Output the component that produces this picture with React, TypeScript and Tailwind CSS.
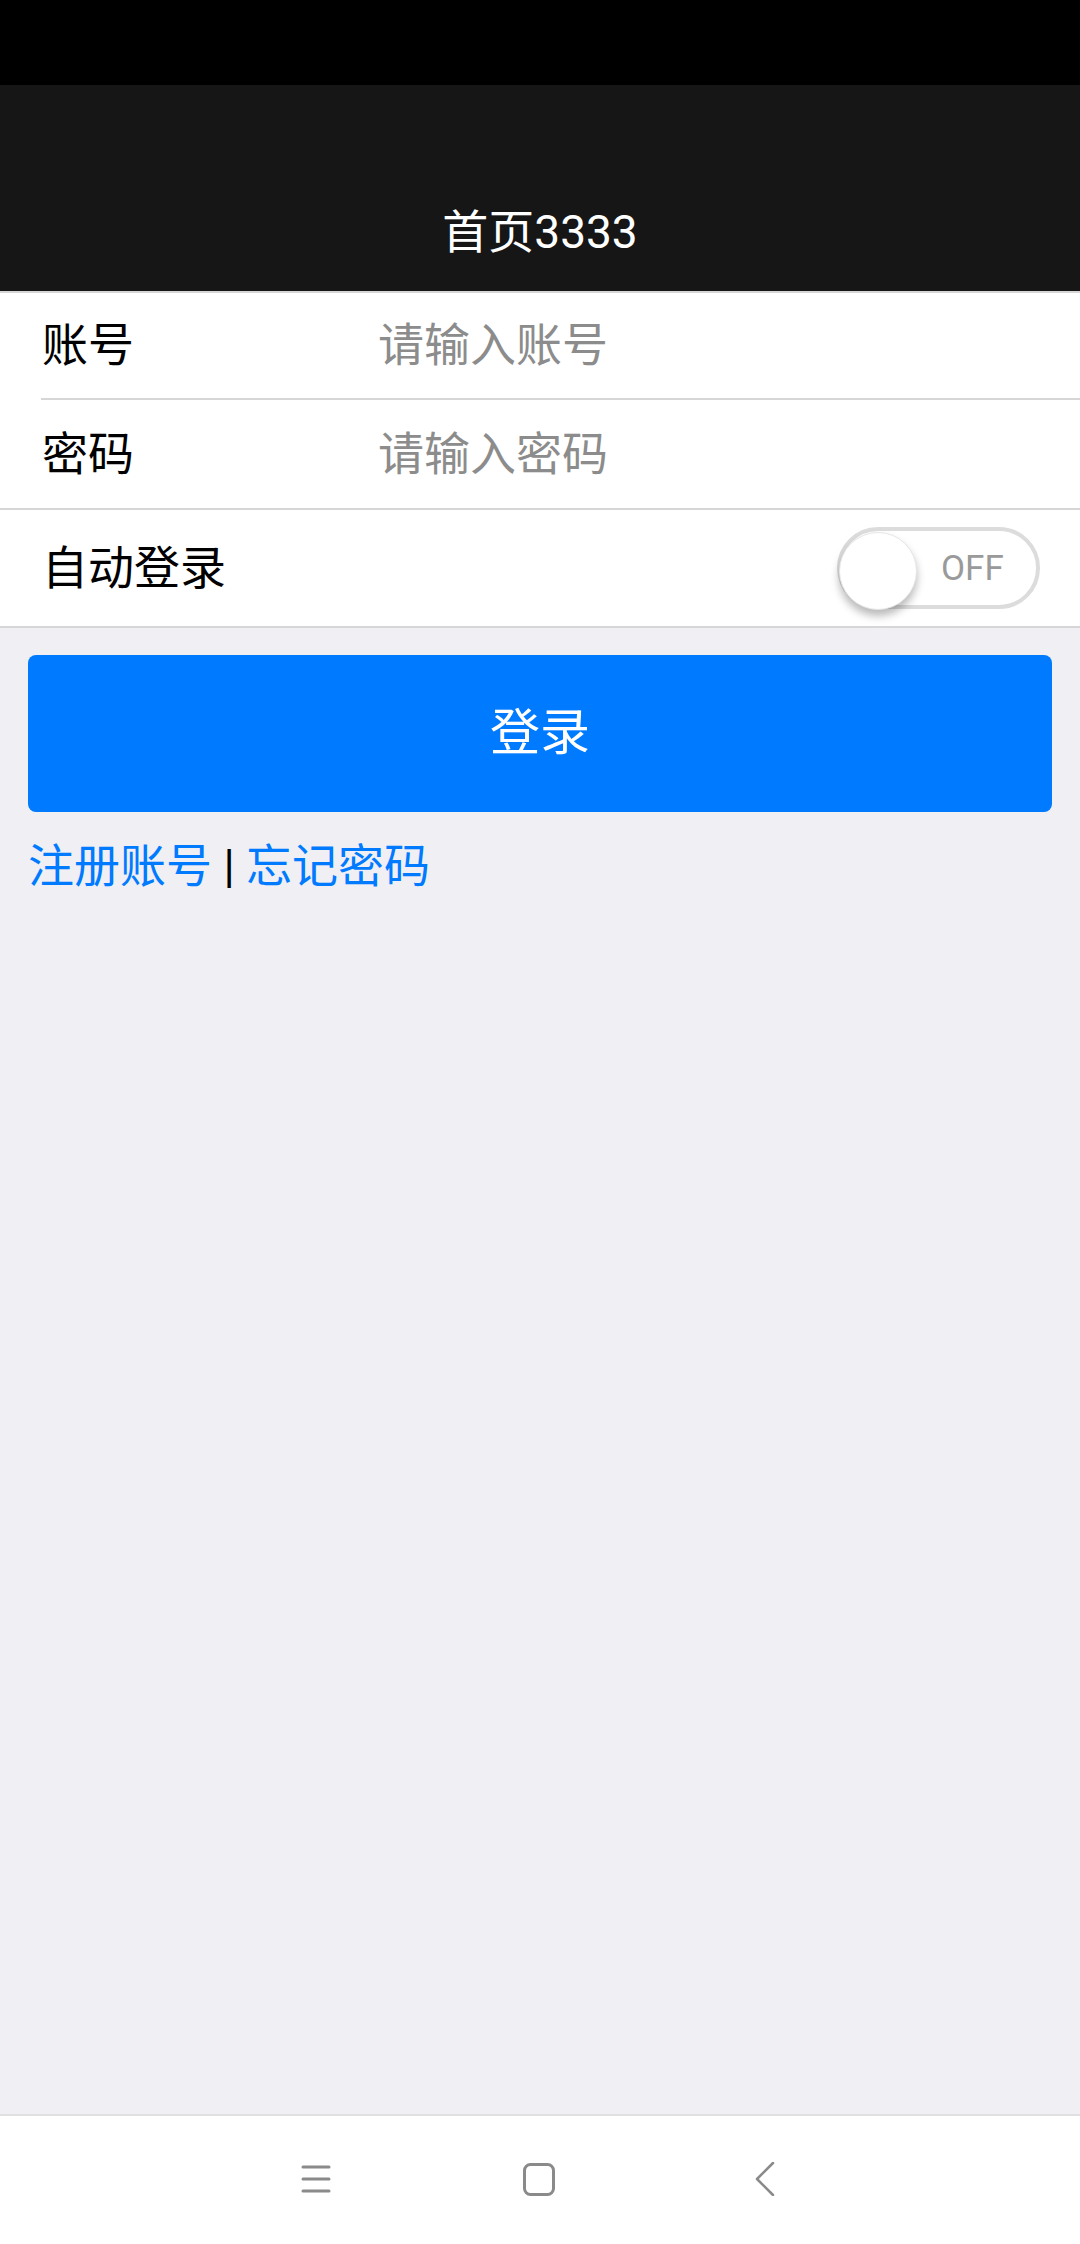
import { useState } from "react";

const font = "font-['Roboto','Noto_Sans_CJK_SC',sans-serif]";

function Toggle() {
  const [on, setOn] = useState(false);
  return (
    <button
      onClick={() => setOn(!on)}
      className="relative w-[203px] h-[82px] rounded-full border-[4px] border-[#dcdcdc] bg-white flex items-center"
    >
      <span className="absolute left-[-2px] top-[1px] w-[78px] h-[78px] rounded-full bg-white shadow-[0_6px_8px_rgba(0,0,0,0.28)] border border-[#e6e6e6]" />
      <span className="ml-[100px] text-[35px] text-[#9a9a9a] leading-none">{on ? "ON" : "OFF"}</span>
    </button>
  );
}

export default function App() {
  return (
    <div className={`h-[2244px] flex flex-col bg-[#efeff4] ${font}`}>
      {/* status bar */}
      <div className="h-[85px] bg-black" />

      {/* header */}
      <div className="bg-[#161616] pt-[88px]">
        <div className="h-[118px] flex items-center justify-center text-white text-[46px]">首页3333</div>
      </div>

      {/* form */}
      <div className="bg-white border-t-2 border-b-2 border-[#d6d6d6]">
        <div className="flex items-center h-[105px] pl-[42px]">
          <span className="w-[336px] text-[46px] text-black">账号</span>
          <input
            placeholder="请输入账号"
            className="flex-1 text-[46px] bg-transparent outline-none placeholder:text-[#8c8c8c]"
          />
        </div>
        <div className="ml-[41px] h-[2px] bg-[#d6d6d6]" />
        <div className="h-[108px] flex items-center pl-[42px]">
          <span className="w-[336px] text-[46px] text-black">密码</span>
          <input
            type="password"
            placeholder="请输入密码"
            className="flex-1 text-[46px] bg-transparent outline-none placeholder:text-[#8c8c8c]"
          />
        </div>
        <div className="h-[2px] bg-[#d6d6d6]" />
        <div className="h-[116px] flex items-center justify-between pl-[42px] pr-[40px]">
          <span className="text-[46px] text-black">自动登录</span>
          <Toggle />
        </div>
      </div>

      {/* actions */}
      <div className="flex-1 px-[28px]">
        <button className="mt-[27px] w-full h-[157px] rounded-[8px] bg-[#007aff] text-white text-[50px]">登录</button>
        <div className="mt-[27px] text-[46px] leading-[1.2]">
          <span className="text-[#007aff]">注册账号</span>
          <span className="text-black"> | </span>
          <span className="text-[#007aff]">忘记密码</span>
        </div>
      </div>

      {/* nav bar */}
      <div className="h-[130px] bg-white border-t-2 border-[#e0e0e0] flex items-center justify-center gap-[192px] pb-[2px] pr-[4px]">
        <svg width="30" height="28" viewBox="0 0 30 28" className="text-[#8a8a8a]">
          <g stroke="currentColor" strokeWidth="3" strokeLinecap="round">
            <line x1="2" y1="2" x2="28" y2="2" />
            <line x1="2" y1="14" x2="28" y2="14" />
            <line x1="2" y1="26" x2="28" y2="26" />
          </g>
        </svg>
        <svg width="32" height="33" viewBox="0 0 32 33" className="text-[#8a8a8a]">
          <rect x="1.5" y="1.5" width="29" height="30" rx="6" fill="none" stroke="currentColor" strokeWidth="3" />
        </svg>
        <svg width="20" height="34" viewBox="0 0 20 34" className="ml-[8px] text-[#8a8a8a]">
          <polyline points="18,1 2,17 18,33" fill="none" stroke="currentColor" strokeWidth="2.5" strokeLinecap="round" strokeLinejoin="round" />
        </svg>
      </div>
    </div>
  );
}
